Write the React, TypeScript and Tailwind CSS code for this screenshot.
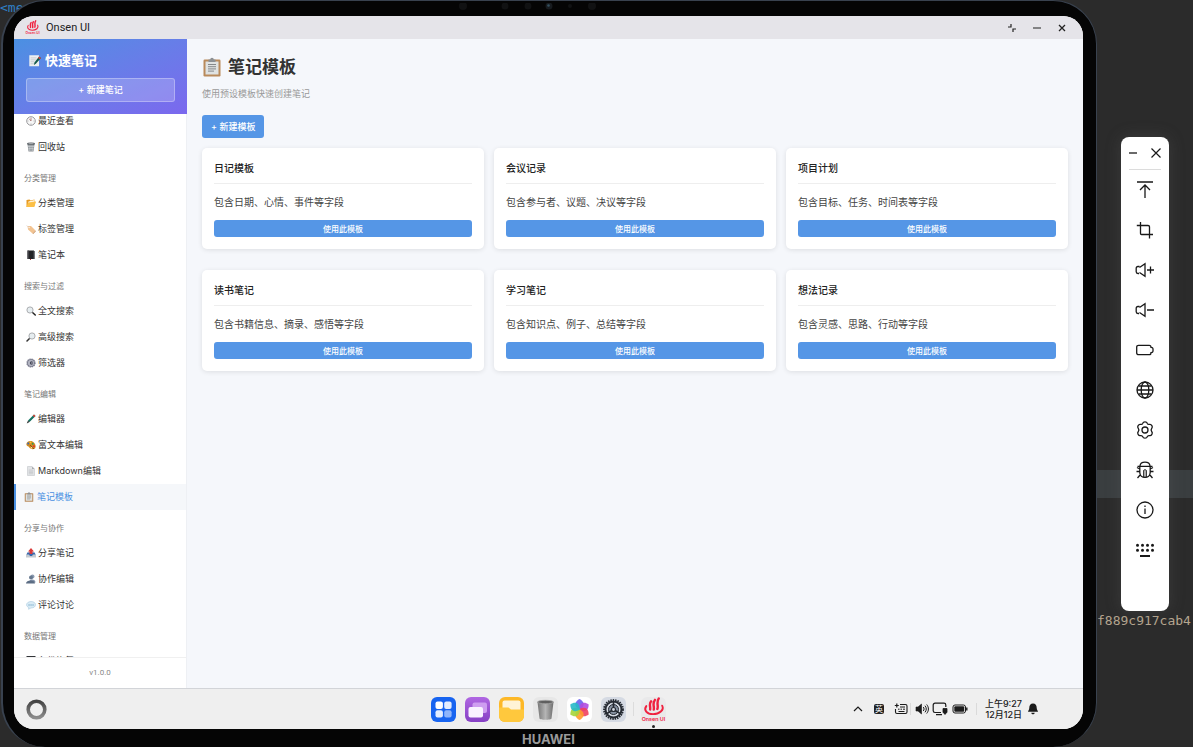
import type { ReactNode } from "react";

type IconName =
  | "clock" | "trash" | "folder" | "tag" | "book" | "search" | "searchRight" | "gear"
  | "pen" | "palette" | "page" | "clipboard" | "outbox" | "people" | "bubble" | "disk" | "memo";

const drawings: Record<IconName, ReactNode> = {
  clock: (
    <>
      <circle cx="10" cy="10" r="8.6" fill="#f7f7f7" stroke="#8f8f93" strokeWidth="1.8" />
      <path d="M10 3.5V10L6.5 5.5" stroke="#9a5a55" strokeWidth="1.3" fill="none" />
      <path d="M10 15v2M3.5 10h1.5M15 10h1.5" stroke="#777" strokeWidth="1" />
    </>
  ),
  trash: (
    <>
      <path d="M3 4h14l-2 15H5z" fill="#8b9094" />
      <path d="M6 6l1 12M10 6v12M14 6l-1 12M4 9h12M5 13h10" stroke="#cfd3d6" strokeWidth="1.2" />
      <ellipse cx="10" cy="3.6" rx="8" ry="2.6" fill="#5d6266" />
      <ellipse cx="10" cy="3.3" rx="5.5" ry="1.3" fill="#a7acb0" />
    </>
  ),
  folder: (
    <>
      <path d="M1 4l6-1 2 2 8-2v4l2 1-3 10H1z" fill="#e69a23" />
      <path d="M5 7l12-3v6H4z" fill="#fff3da" />
      <path d="M4 9l16-2-3.5 11H1z" fill="#fcbf45" />
    </>
  ),
  tag: (
    <>
      <path d="M3 4l7 0 9 9-6 6-9-8z" fill="#f2c391" />
      <path d="M13 19l6-6 .8 1.4-5.4 5.4z" fill="#c98f5b" />
      <circle cx="6" cy="7" r="1.3" fill="#fff" />
      <path d="M6 7L1 3" stroke="#d6cfc6" strokeWidth="1.2" />
    </>
  ),
  book: (
    <>
      <path d="M3 1h13v17H3z" fill="#242427" />
      <path d="M3 1h2.5v17H3z" fill="#4a4a50" />
      <path d="M8 18h2v2H8z" fill="#c33" />
      <path d="M15 2h2.6v16H15z" fill="#55555b" />
    </>
  ),
  search: (
    <>
      <path d="M12.5 12.5l6 5.5" stroke="#222" strokeWidth="3" strokeLinecap="round" />
      <circle cx="8" cy="8" r="6.2" fill="#e6edf0" stroke="#a3a5a8" strokeWidth="1.8" />
    </>
  ),
  searchRight: (
    <>
      <path d="M7.5 12.5L2 18" stroke="#333" strokeWidth="3" strokeLinecap="round" />
      <circle cx="12" cy="8" r="6.2" fill="#e6edf0" stroke="#a3a5a8" strokeWidth="1.8" />
    </>
  ),
  gear: (
    <>
      <circle cx="10" cy="10" r="8" fill="#8c8e9e" stroke="#6b6d80" strokeWidth="2.4" strokeDasharray="2.4 1.8" />
      <circle cx="10" cy="10" r="6" fill="#b5b7c4" />
      <circle cx="11" cy="10" r="3.4" fill="#454758" />
      <circle cx="12" cy="10" r="1.4" fill="#c9cad4" />
    </>
  ),
  pen: (
    <>
      <path d="M16 1l3 3L7 16l-3-3z" fill="#12695a" />
      <path d="M16 1l3 3-2.5 2.5-3-3z" fill="#d9463b" />
      <path d="M4 13l3 3-5.5 3z" fill="#2b3230" />
      <path d="M14 4.5L5 13.5" stroke="#37a08b" strokeWidth="1" />
    </>
  ),
  palette: (
    <>
      <path d="M9 2C3 2 0 6 1 10c1 3 4 2 5 4 2 4 8 6 12 3 4-6-2-15-9-15z" fill="#d08a20" />
      <circle cx="4.5" cy="7" r="1.9" fill="#2c68c9" />
      <circle cx="9" cy="4.8" r="1.8" fill="#f3cc2d" />
      <circle cx="13.5" cy="7.5" r="1.8" fill="#2e9b55" />
      <circle cx="15.8" cy="12.5" r="2.2" fill="#e2372b" />
      <path d="M8 10l8 8" stroke="#6c3913" strokeWidth="1.4" />
      <circle cx="11" cy="15.5" r="1.6" fill="#ffe6a8" />
    </>
  ),
  page: (
    <>
      <path d="M3 1h9l5 5v13H3z" fill="#e3e5e7" stroke="#b9bcc0" strokeWidth="1" />
      <path d="M12 1l5 5h-5z" fill="#a9adb1" />
      <path d="M5.5 8h9M5.5 10.5h9M5.5 13h9M5.5 15.5h9" stroke="#b4b7ba" strokeWidth="1" />
    </>
  ),
  clipboard: (
    <>
      <rect x="1.5" y="2.5" width="17" height="17" rx="1.2" fill="#b98a5b" />
      <path d="M3.500 4.500h13v13h-13z" fill="#dfe2e2" />
      <path d="M6.500 2.500h1.700a1.800 1.800 0 0 1 3.600 0h1.700V5h-7z" fill="#8c9094" />
      <path d="M6 7.500h8M6 9.700h8M6 11.900h8M6 14.100h6" stroke="#85888b" strokeWidth="1" />
    </>
  ),
  outbox: (
    <>
      <path d="M3 9h14l3 5v5H0v-5z" fill="#c4cad0" />
      <path d="M3 9h14l2 4h-5l-2 3H8l-2-3H1z" fill="#3467ae" />
      <path d="M10 0l6 7h-3v5H7V7H4z" fill="#d93b3b" />
    </>
  ),
  people: (
    <>
      <circle cx="13" cy="5" r="4" fill="#8b9bb0" />
      <path d="M6 17c0-8 13-8 13 0z" fill="#8191a8" />
      <circle cx="10" cy="7" r="4" fill="#66788f" />
      <path d="M0 19c0-8 18-8 18 0z" fill="#5c6d84" />
    </>
  ),
  bubble: (
    <>
      <path d="M10 3c6 0 9 3 9 6.500S16 16 10 16l-5 2.500.5-3.500C3 14 1 12 1 9.500S4 3 10 3z" fill="#d9ebf5" stroke="#9fc3da" strokeWidth="1" />
      <path d="M5 9h2.200v2H5zM9 9h2.200v2H9zM13 9h2.200v2H13z" fill="#5795bd" />
    </>
  ),
  disk: (
    <>
      <path d="M1 0h18v19H1z" fill="#333539" />
      <path d="M5 4h10v5H5zM4 12h12v6H4z" fill="#c8ccd0" />
    </>
  ),
  memo: (
    <>
      <path d="M2 2h15v17H2z" fill="#eceff1" />
      <path d="M4 6h9M4 9h8M4 12h6M4 15h6" stroke="#b5babd" strokeWidth="1" />
      <path d="M17 4l3 2-8 9-3 2 1-4z" fill="#13594a" />
      <path d="M17 4l3 2-1.500 2-3-2z" fill="#d9463b" />
    </>
  ),
};

function Glyph({ name, className }: { name: IconName; className: string }) {
  return (
    <svg viewBox="0 0 20 20" className={className} aria-hidden="true">
      {drawings[name]}
    </svg>
  );
}

type Item = { icon: IconName; label: string; active?: boolean };
type Section = { title?: string; items: Item[] };

const sections: Section[] = [
  { items: [{ icon: "clock", label: "最近查看" }, { icon: "trash", label: "回收站" }] },
  {
    title: "分类管理",
    items: [
      { icon: "folder", label: "分类管理" },
      { icon: "tag", label: "标签管理" },
      { icon: "book", label: "笔记本" },
    ],
  },
  {
    title: "搜索与过滤",
    items: [
      { icon: "search", label: "全文搜索" },
      { icon: "searchRight", label: "高级搜索" },
      { icon: "gear", label: "筛选器" },
    ],
  },
  {
    title: "笔记编辑",
    items: [
      { icon: "pen", label: "编辑器" },
      { icon: "palette", label: "富文本编辑" },
      { icon: "page", label: "Markdown编辑" },
      { icon: "clipboard", label: "笔记模板", active: true },
    ],
  },
  {
    title: "分享与协作",
    items: [
      { icon: "outbox", label: "分享笔记" },
      { icon: "people", label: "协作编辑" },
      { icon: "bubble", label: "评论讨论" },
    ],
  },
  { title: "数据管理", items: [{ icon: "disk", label: "备份恢复" }] },
];

const templates = [
  { title: "日记模板", text: "包含日期、心情、事件等字段" },
  { title: "会议记录", text: "包含参与者、议题、决议等字段" },
  { title: "项目计划", text: "包含目标、任务、时间表等字段" },
  { title: "读书笔记", text: "包含书籍信息、摘录、感悟等字段" },
  { title: "学习笔记", text: "包含知识点、例子、总结等字段" },
  { title: "想法记录", text: "包含灵感、思路、行动等字段" },
];

function OnsenLogo({ className }: { className: string }) {
  return (
    <svg viewBox="0 0 26 26" className={className} aria-hidden="true">
      <g fill="none" stroke="#f0213f" strokeLinecap="round">
        <path d="M10.500 4.500c-2.500 3-.5 4.500-1 8.500M14.500 3c-3 4-.5 6.500-1.200 10M18.500 1.500c-3 4.500 0 7.500-1.500 11" strokeWidth="2.500" />
        <path d="M5.500 9.500c-3 4 .5 8.300 7 8.300 6.500 0 12-4.300 9.500-8.800" strokeWidth="2" />
      </g>
      <text x="13" y="25" textAnchor="middle" fontSize="5.600" fontWeight="600" fill="#f0213f" fontFamily="Inter, sans-serif">
        Onsen UI
      </text>
    </svg>
  );
}

function TitleBar() {
  return (
    <header className="flex h-[23px] shrink-0 items-center bg-[#e5e4e9] pr-[15px] pl-[11px] text-[#222]">
      <OnsenLogo className="size-[15px]" />
      <span className="ml-[6px] flex-1 font-[Roboto,sans-serif] text-[11px] leading-4">Onsen UI</span>
      <div className="flex items-center gap-3">
        <button aria-label="还原" className="grid size-[13px] place-items-center">
          <svg viewBox="0 0 12 12" className="size-3" fill="none" stroke="#222" strokeWidth="1.200">
            <path d="M5 2v3H2M7 10V7h3" />
          </svg>
        </button>
        <button aria-label="最小化" className="grid size-[13px] place-items-center">
          <svg viewBox="0 0 12 12" className="size-3" stroke="#222" strokeWidth="1.200">
            <path d="M2 6h8" />
          </svg>
        </button>
        <button aria-label="关闭" className="grid size-[13px] place-items-center">
          <svg viewBox="0 0 12 12" className="size-3" stroke="#222" strokeWidth="1.300">
            <path d="M3 3l6 6M9 3l-6 6" />
          </svg>
        </button>
      </div>
    </header>
  );
}

function Sidebar() {
  return (
    <aside className="flex w-[173px] shrink-0 flex-col border-r border-[#eef0f4] bg-white">
      <div className="-mr-px shrink-0 bg-linear-to-br from-[#4a90e2] to-[#7b68ee] p-3 text-white">
        <h2 className="flex items-center gap-1 pl-0.5 text-[13px] leading-[18px] font-bold">
          <Glyph name="memo" className="size-[13px]" />
          快速笔记
        </h2>
        <button className="mt-[9px] h-6 w-full rounded-[3px] border border-white/30 bg-white/20 text-[9px] leading-3 font-medium">
          + 新建笔记
        </button>
      </div>
      <nav className="min-h-0 flex-1 overflow-hidden">
        <div className="-mt-1.5">
          {sections.map((section, i) => (
            <section key={i}>
              {section.title && (
                <h3 className="pt-3 pb-1.5 pl-[10px] text-[8px] leading-3 text-[#777]">{section.title}</h3>
              )}
              <ul>
                {section.items.map((item) => (
                  <li key={item.label}>
                    <a
                      href="#"
                      className={
                        item.active
                          ? "flex h-[26px] items-center gap-[3px] border-l-2 border-[#4a90e2] bg-[#f5f7fa] pl-2 text-[9px] text-[#4a90e2]"
                          : "flex h-[26px] items-center gap-[2px] pl-3 text-[9px] text-[#333]"
                      }
                    >
                      <Glyph name={item.icon} className="size-[10px]" />
                      {item.label}
                    </a>
                  </li>
                ))}
              </ul>
            </section>
          ))}
        </div>
      </nav>
      <div className="flex h-[31px] shrink-0 items-center justify-center border-t border-[#f0f0f0] text-[8px] text-[#888]">
        <span className="font-[Roboto,sans-serif]">v1.0.0</span>
      </div>
    </aside>
  );
}

function Content() {
  return (
    <main className="min-w-0 flex-1 bg-[#f5f7fb] px-[15px] pt-4">
      <h1 className="flex items-center gap-1.5 text-[17px] leading-6 font-bold text-[#333]">
        <Glyph name="clipboard" className="size-5" />
        笔记模板
      </h1>
      <p className="mt-2 text-[9px] leading-[14px] text-[#999]">使用预设模板快速创建笔记</p>
      <button className="mt-[14px] block h-[23px] rounded-[3px] bg-[#5596e6] px-[9px] text-[9px] font-medium text-white">
        + 新建模板
      </button>
      <div className="mt-[10px] grid grid-cols-3 gap-x-[10px] gap-y-[21px]">
        {templates.map((t) => (
          <article key={t.title} className="rounded-[5px] bg-white p-3 shadow-[0_1px_5px_rgba(0,0,0,0.1)]">
            <h2 className="border-b border-[#eee] pb-[7px] text-[10px] leading-4 font-medium text-[#222]">{t.title}</h2>
            <p className="mt-[10px] text-[10px] leading-4 text-[#444]">{t.text}</p>
            <button className="mt-[10px] block h-[17px] w-full rounded-[3px] bg-[#5596e6] text-[8px] leading-3 font-medium text-white">
              使用此模板
            </button>
          </article>
        ))}
      </div>
    </main>
  );
}

const petals = ["#6a62ee", "#b04be0", "#f0405f", "#ff9a2c", "#a6d53a", "#28b8c8"];

function Dock() {
  return (
    <footer className="grid h-[41px] shrink-0 grid-cols-[1fr_auto_1fr] items-center border-t border-[#d2d4d8] bg-[#efefef]">
      <button aria-label="主屏幕" className="ml-3 size-[21px] rounded-full">
        <svg viewBox="0 0 21 21" className="size-[21px]" fill="none">
          <defs>
            <linearGradient id="ring" x1="0" y1="0" x2="0" y2="1">
              <stop stopColor="#444" />
              <stop offset="1" stopColor="#8c8c8c" />
            </linearGradient>
          </defs>
          <circle cx="10.500" cy="10.500" r="8.300" stroke="url(#ring)" strokeWidth="3.600" />
        </svg>
      </button>
      <div className="flex items-center gap-[9px]">
        <button aria-label="应用中心" className="size-[25px]">
          <svg viewBox="0 0 25 25">
            <rect width="25" height="25" rx="6" fill="#1864f0" />
            <rect x="4.500" y="4.500" width="7.400" height="7.400" rx="2" fill="#fff" />
            <rect x="13.200" y="4.500" width="7.400" height="7.400" rx="2" fill="#e3edff" />
            <rect x="4.500" y="13.200" width="7.400" height="7.400" rx="2" fill="#e3edff" />
            <rect x="13.200" y="13.200" width="7.400" height="7.400" rx="2" fill="#8fb5fb" />
          </svg>
        </button>
        <button aria-label="多任务" className="size-[25px]">
          <svg viewBox="0 0 25 25">
            <defs>
              <linearGradient id="task" x1="0" y1="0" x2="0" y2="1">
                <stop stopColor="#b067e2" />
                <stop offset="1" stopColor="#8640c4" />
              </linearGradient>
            </defs>
            <rect width="25" height="25" rx="6" fill="url(#task)" />
            <rect x="7.500" y="5.500" width="14.500" height="10.500" rx="2" fill="#ce9df0" />
            <rect x="3.500" y="10" width="14.500" height="10.500" rx="2" fill="#f9f2ff" />
          </svg>
        </button>
        <button aria-label="文件管理" className="size-[25px]">
          <svg viewBox="0 0 25 25">
            <rect width="25" height="25" rx="6" fill="#fdb827" />
            <rect x="3.500" y="3.500" width="18" height="13" rx="2" fill="#fff3d6" />
            <path d="M0 10.500h9.500l2.500 2H25V19a6 6 0 0 1-6 6H6a6 6 0 0 1-6-6z" fill="#ffc83d" />
          </svg>
        </button>
        <button aria-label="回收站" className="size-[25px]">
          <svg viewBox="0 0 25 25">
            <defs>
              <linearGradient id="bin" x1="0" x2="1">
                <stop stopColor="#777" />
                <stop offset=".5" stopColor="#b5b5b5" />
                <stop offset="1" stopColor="#6e6e6e" />
              </linearGradient>
            </defs>
            <rect width="25" height="25" rx="6" fill="#e7e7e7" />
            <path d="M4.500 5h16l-2 16.500c0 1.700-12 1.700-12 0z" fill="url(#bin)" />
            <ellipse cx="12.500" cy="5" rx="8" ry="1.700" fill="#5f5f5f" stroke="#a4a4a4" strokeWidth=".8" />
          </svg>
        </button>
        <button aria-label="图库" className="size-[25px]">
          <svg viewBox="0 0 25 25">
            <rect width="25" height="25" rx="6" fill="#fff" />
            {petals.map((color, i) => (
              <path
                key={color}
                d="M12.500 13C5.500 8.500 8.500 4 12.500 2c4 2 7 6.500 0 11z"
                fill={color}
                fillOpacity=".9"
                transform={`rotate(${i * 60} 12.500 12.500)`}
              />
            ))}
          </svg>
        </button>
        <button aria-label="设置" className="size-[25px]">
          <svg viewBox="0 0 25 25" fill="none" stroke="#252a32">
            <rect width="25" height="25" rx="6" fill="#d5dae3" stroke="none" />
            <circle cx="12.500" cy="12.500" r="9.400" strokeWidth="2" strokeDasharray="1.500 .9" />
            <circle cx="12.500" cy="12.500" r="8" strokeWidth="2" />
            <circle cx="12.500" cy="12.500" r="5" fill="#8691a1" strokeWidth="1" />
            <path d="M12.500 12.500V5M12.500 12.500l-6.500 4M12.500 12.500l6.500 4" strokeWidth="1.600" />
            <circle cx="12.500" cy="12.500" r="2" fill="#d5dae3" strokeWidth="1.200" />
          </svg>
        </button>
        <span className="-mx-0.5 h-[14px] w-px bg-[#dcdcdc]" />
        <button aria-label="Onsen UI" className="relative size-[25px] rounded-md bg-[#e9e9ea]">
          <OnsenLogo className="size-[25px]" />
          <span className="absolute -bottom-[6px] left-[11px] size-[3px] rounded-full bg-[#222]" />
        </button>
      </div>
      <div className="flex items-center justify-end pr-11 text-[#1b1b1b]">
        <svg viewBox="0 0 12 12" className="size-3" fill="none" stroke="currentColor" strokeWidth="1.200">
          <path d="M2 8l4-4 4 4" />
        </svg>
        <span className="ml-[10px] grid size-[10px] place-items-center rounded-[2px] bg-[#222] text-[8px] leading-[10px] text-white">
          英
        </span>
        <svg viewBox="0 0 14 12" className="ml-[10px] h-3 w-[14px]" fill="none" stroke="currentColor">
          <path d="M6 1.500h5.500a1.500 1.500 0 0 1 1.500 1.500v6a1.500 1.500 0 0 1-1.500 1.500H3A1.500 1.500 0 0 1 1.500 9V6" strokeWidth="1.100" />
          <path d="M2.800.5v4M.8 2.500h4" strokeWidth="1.200" />
          <path d="M6 4h5M4 6.200h1.500M6.500 6.200H8M9 6.200h2M4.500 8.500h6" strokeWidth="1" />
        </svg>
        <span className="mr-1 ml-0.5 h-3 w-px bg-[#dadada]" />
        <svg viewBox="0 0 14 12" className="h-3 w-[14px]" fill="none" stroke="currentColor">
          <path d="M1 4h2l3.500-3v10L3 8H1z" fill="currentColor" strokeWidth=".6" />
          <path d="M8.300 4c1 1.300 1 2.700 0 4M10 2.700c1.700 2.200 1.700 4.400 0 6.600M11.700 1.500c2.300 3 2.300 6 0 9" strokeWidth="1" />
        </svg>
        <svg viewBox="0 0 16 14" className="ml-[3px] h-[14px] w-4" fill="none" stroke="currentColor" strokeWidth="1.200">
          <path d="M9 10.500H3A1.800 1.800 0 0 1 1.200 8.700V3A1.800 1.800 0 0 1 3 1.200h9A1.800 1.800 0 0 1 13.800 3v2M4 12.700h6" />
          <path d="M11 6.500h4v4l-2 1.300-2-1.300zM13 11v2" fill="currentColor" strokeWidth=".8" />
        </svg>
        <svg viewBox="0 0 16 10" className="ml-1 h-[10px] w-4" fill="none" stroke="currentColor">
          <rect x="1" y="1" width="12.500" height="8" rx="2" />
          <rect x="2.300" y="2.300" width="9.900" height="5.400" rx="1" fill="currentColor" stroke="none" />
          <path d="M14.800 3.500v3" strokeWidth="1.400" />
        </svg>
        <span className="mx-2 h-3 w-px bg-[#dadada]" />
        <time className="text-right text-[9px] leading-[11px] font-medium whitespace-nowrap">
          上午9:27
          <br />
          12月12日
        </time>
        <svg viewBox="0 0 12 12" className="ml-[5px] size-3" fill="currentColor">
          <path d="M6 .5c-2.500 0-3.700 1.800-3.700 4.200C2.300 7 1 7.500 1 8.700h10c0-1.200-1.300-1.700-1.300-4C9.700 2.300 8.500.5 6 .5zM4.300 9.700h3.400c-.2 2-3.200 2-3.400 0z" />
        </svg>
      </div>
    </footer>
  );
}

const tools: { label: string; drawing: ReactNode }[] = [
  { label: "上滑", drawing: <path d="M2 2h16M10 18V5M5 10l5-5 5 5" /> },
  { label: "截图", drawing: <path d="M5.500 2v11.500c0 .8.200 1 1 1h11.500M1.800 5.500H13c1 0 1.500.3 1.500 1.300V18.500" /> },
  {
    label: "音量加",
    drawing: <path d="M4.500 6.500H3c-1.200 0-1.800.6-1.800 1.700v3.600c0 1.100.6 1.700 1.800 1.700h1M4.500 12.500l5.500 3.800V3.700L4.500 7.500M12 10h7M15.500 6.500v7" />,
  },
  {
    label: "音量减",
    drawing: <path d="M4.500 6.500H3c-1.200 0-1.800.6-1.800 1.700v3.600c0 1.100.6 1.700 1.800 1.700h1M4.500 12.500l5.500 3.800V3.700L4.500 7.500M12 10h7" />,
  },
  {
    label: "电池",
    drawing: (
      <path d="M3.500 5.300h10.700c1.300 0 1.800.7 1.800 2 1.300 0 2 .5 2 1.400v2.600c0 .9-.7 1.400-2 1.400 0 1.300-.5 2-1.800 2H3.500c-1 0-1.800-.8-1.800-1.800V7.100c0-1 .8-1.800 1.800-1.800z" />
    ),
  },
  {
    label: "位置",
    drawing: (
      <>
        <circle cx="10" cy="10" r="8" />
        <ellipse cx="10" cy="10" rx="3.800" ry="8" />
        <path d="M2 10h16M3.500 6h13M3.500 14h13" />
      </>
    ),
  },
  {
    label: "设置",
    drawing: (
      <>
        <path d="M7.800 3.200C8.300 1.400 11.700 1.400 12.200 3.200c.4 1 1.300 1.400 2.300 1.200 2-.4 3.600 2.300 2.300 3.800-.7.900-.7 2.700 0 3.600 1.300 1.500-.3 4.200-2.300 3.800-1-.2-1.900.2-2.300 1.200-.5 1.800-3.900 1.800-4.400 0-.4-1-1.300-1.400-2.300-1.200-2 .4-3.600-2.300-2.300-3.800.7-.9.700-2.700 0-3.600-1.300-1.500.3-4.200 2.300-3.800 1 .2 1.900-.2 2.300-1.200z" />
        <circle cx="10" cy="10" r="3" />
      </>
    ),
  },
  {
    label: "调试",
    drawing: (
      <>
        <path d="M5 5.800C5.500.8 14.500.8 15 5.800M2.500 6.300h15M4.800 6.500v6c0 6.500 10.400 6.500 10.400 0v-6M1.500 11.500h3.300M15.200 11.500h3.300M5.500 14.500l-3 3.500M14.500 14.500l3 3.500M4.800 9L2 7.500M15.200 9L18 7.500" />
        <path d="M8.500 10.500c0-1 3-1 3 0V17h-3z" fill="#aaa" strokeWidth=".8" />
      </>
    ),
  },
  {
    label: "信息",
    drawing: (
      <>
        <circle cx="10" cy="10" r="8" />
        <path d="M10 8.500v5.500M10 5.500v1.400" />
      </>
    ),
  },
  {
    label: "键盘",
    drawing: (
      <>
        <path d="M2.500 5.200h.01M7.500 5.200h.01M12.500 5.200h.01M17.500 5.200h.01M2.500 10.300h.01M7.500 10.300h.01M12.500 10.300h.01M17.500 10.300h.01" strokeWidth="3" strokeLinecap="round" />
        <path d="M5 16h10" strokeWidth="2" />
      </>
    ),
  },
];

function ToolPanel() {
  return (
    <div className="relative mx-auto flex w-12 flex-col rounded-lg bg-white pb-[41px] text-[#191919] shadow-[0_0_16px_rgba(110,110,110,0.25)]">
      <div className="mx-2 flex h-[33px] items-center justify-between border-b border-[#dcdcdc]">
        <button aria-label="最小化面板">
          <svg viewBox="0 0 8 12" className="h-3 w-2" stroke="currentColor" strokeWidth="1.300">
            <path d="M0 6h8" />
          </svg>
        </button>
        <button aria-label="关闭面板">
          <svg viewBox="0 0 11 12" className="h-3 w-[11px]" stroke="currentColor" strokeWidth="1.200">
            <path d="M1.500 1.500l9 9M10.500 1.500l-9 9" />
          </svg>
        </button>
      </div>
      {tools.map((tool) => (
        <button key={tool.label} aria-label={tool.label} className="grid h-10 place-items-center">
          <svg viewBox="0 0 20 20" className="size-5" fill="none" stroke="currentColor" strokeWidth="1.300">
            {tool.drawing}
          </svg>
        </button>
      ))}
    </div>
  );
}

function Sensors() {
  return (
    <div className="flex h-[14px] shrink-0 items-center justify-center">
      <svg viewBox="0 0 140 10" className="-ml-[41px] h-[10px] w-[140px]" fill="#111213">
        <circle cx="5" cy="3" r="4" />
        <circle cx="47" cy="3" r="3.500" />
        <circle cx="70" cy="3" r="3.500" />
        <circle cx="91" cy="3" r="3.500" fill="#171b1f" />
        <circle cx="90.500" cy="2.500" r="1.300" fill="#34505f" />
        <circle cx="112" cy="3" r="2" />
        <circle cx="134" cy="3" r="4" />
      </svg>
    </div>
  );
}

export default function App() {
  return (
    <div className="relative flex h-screen w-full overflow-hidden bg-[#2b2b2b] font-['Inter','Noto_Sans_CJK_SC',sans-serif]">
      <span className="absolute top-0 left-0 font-['DejaVu_Sans_Mono',monospace] text-[13px] leading-4 text-[#2f7fc4]">&lt;me</span>
      <div className="relative ml-px flex min-w-0 flex-1 flex-col rounded-[44px] border-t border-r border-l-2 border-[#39424f] bg-[#050505] pr-[13px] pl-[11px]">
        <Sensors />
        <div className="mt-px flex min-h-0 flex-1 flex-col overflow-hidden rounded-[20px] bg-white">
          <TitleBar />
          <div className="flex min-h-0 flex-1">
            <Sidebar />
            <Content />
          </div>
          <Dock />
        </div>
        <p className="h-[18px] shrink-0 text-center font-[Inter,sans-serif] text-[13px] leading-5 font-bold text-[#9a9a9a]">
          HUAWEI
        </p>
      </div>
      <div className="relative flex w-24 shrink-0 flex-col pt-[137px]">
        <span className="absolute inset-x-0 top-[470px] h-7 bg-[#3a3e40]" />
        <ToolPanel />
        <code className="block font-['DejaVu_Sans_Mono',monospace] text-[13px] leading-5 text-[#b5a58f]">f889c917cab4</code>
      </div>
    </div>
  );
}
